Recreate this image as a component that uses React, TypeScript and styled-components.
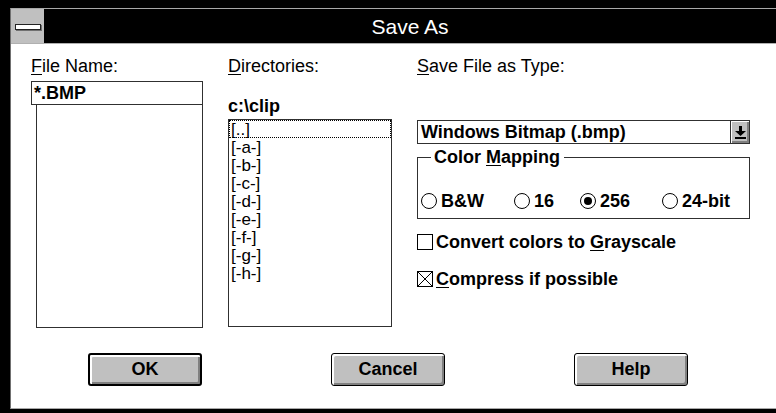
import styled, { createGlobalStyle } from "styled-components"

const Global = createGlobalStyle`
  html, body {
    margin: 0;
    padding: 0;
    background: #000;
  }
  body {
    font-family: "Liberation Sans", Arial, sans-serif;
    color: #000;
  }
  * {
    box-sizing: border-box;
  }
`

const Screen = styled.div`
  width: 776px;
  height: 413px;
  background: #000;
  padding: 8px 0 4px 10px;
  display: flex;
  overflow: hidden;
`

const Window = styled.div`
  flex: 1;
  display: flex;
  flex-direction: column;
  border-top: 1px solid #a8a8a8;
  border-left: 1px solid #707070;
  border-bottom: 1px solid #a8a8a8;
  background: #fff;
`

const TitleBar = styled.div`
  height: 35px;
  display: flex;
  background: #000;
  border-bottom: 1px solid #b0b0b0;
`

const SysMenu = styled.div`
  width: 33px;
  background: #c0c0c0;
  display: flex;
  align-items: center;
  justify-content: center;
  padding-top: 2px;
`

const SysBar = styled.div`
  width: 26px;
  height: 6px;
  background: #fff;
  border: 1px solid #222;
  box-shadow: 1px 1px 0 #707070;
`

const Title = styled.div`
  flex: 1;
  display: flex;
  align-items: center;
  justify-content: center;
  color: #fff;
  font-size: 21px;
  padding-top: 2px;
`

const Client = styled.div`
  flex: 1;
  display: flex;
  flex-direction: column;
  padding: 12px 0 0 20px;
`

const Columns = styled.div`
  display: grid;
  grid-template-columns: 172px 164px 333px;
  column-gap: 25px;
`

const Column = styled.div`
  display: flex;
  flex-direction: column;
`

const Label = styled.div`
  font-size: 18px;
  line-height: 20px;
  height: 20px;
  white-space: nowrap;
`

const Key = styled.span`
  text-decoration: underline;
  text-underline-offset: 2px;
  text-decoration-thickness: 1px;
`

const EditBox = styled.div`
  margin-top: 5px;
  height: 24px;
  border: 1px solid #303030;
  font-size: 18px;
  font-weight: 700;
  line-height: 22px;
  padding-left: 2px;
`

const ListBox = styled.div<{ $h: number; $indent?: number }>`
  height: ${(p) => p.$h}px;
  margin-left: ${(p) => p.$indent ?? 0}px;
  border: 1px solid #303030;
  display: flex;
  flex-direction: column;
`

const Path = styled.div`
  margin-top: 20px;
  font-size: 18px;
  font-weight: 700;
  line-height: 20px;
`

const DirItem = styled.div<{ $focus?: boolean }>`
  height: 18px;
  line-height: 17px;
  font-size: 17px;
  padding-left: 1px;
  border: 1px dotted ${(p) => (p.$focus ? "#000" : "transparent")};
`

const Combo = styled.div`
  margin-top: 44px;
  height: 24px;
  border: 1px solid #303030;
  display: flex;
`

const ComboText = styled.div`
  flex: 1;
  font-size: 18px;
  font-weight: 700;
  line-height: 22px;
  padding-left: 3px;
`

const DropButton = styled.div`
  width: 19px;
  border-left: 1px solid #303030;
  background: #c0c0c0;
  box-shadow: inset 1px 1px #fff, inset -2px -2px #808080;
  display: flex;
  align-items: center;
  justify-content: center;
`

const Group = styled.fieldset`
  margin: 3px 0 0;
  height: 72px;
  border: 1px solid #303030;
  padding: 0 3px 0 3px;
`

const Legend = styled.legend`
  margin-left: 10px;
  padding: 0 4px 0 3px;
  font-size: 18px;
  line-height: 20px;
  font-weight: 600;
`

const RadioRow = styled.div`
  margin-top: 24px;
  display: grid;
  grid-template-columns: 93px 66px 82px auto;
`

const Option = styled.div<{ $gap?: number }>`
  display: flex;
  align-items: center;
  gap: ${(p) => p.$gap ?? 4}px;
  font-size: 18px;
  font-weight: 700;
  line-height: 20px;
  white-space: nowrap;
`

const Radio = styled.span<{ $on?: boolean }>`
  width: 16px;
  height: 16px;
  border-radius: 50%;
  border: 1px solid #000;
  background: #fff;
  display: flex;
  align-items: center;
  justify-content: center;

  &::after {
    content: "";
    width: 8px;
    height: 8px;
    border-radius: 50%;
    background: ${(p) => (p.$on ? "#000" : "transparent")};
  }
`

const CheckRow = styled(Option)<{ $top: number }>`
  margin-top: ${(p) => p.$top}px;
`

const Box = styled.span`
  width: 16px;
  height: 16px;
  border: 1px solid #000;
  background: #fff;
  display: flex;
`

const ButtonRow = styled.div`
  margin-top: 25px;
  padding-left: 57px;
  display: flex;
  gap: 129px;
`

const Button = styled.button<{ $default?: boolean }>`
  width: 114px;
  height: 33px;
  background: #c0c0c0;
  border: ${(p) => (p.$default ? 2 : 1)}px solid #000;
  border-radius: 3px;
  box-shadow: inset 2px 2px #fff, inset -2px -2px #808080;
  font-family: "Liberation Sans", Arial, sans-serif;
  font-size: 18px;
  font-weight: 700;
  color: #000;
  padding: 0;
`

const dirs = ["[..]", "[-a-]", "[-b-]", "[-c-]", "[-d-]", "[-e-]", "[-f-]", "[-g-]", "[-h-]"]

const DownArrow = () => (
  <svg width="11" height="13" viewBox="0 0 11 13">
    <rect x="4" y="0" width="3" height="5" fill="#000" />
    <polygon points="0,5 11,5 5.5,10" fill="#000" />
    <rect x="0" y="11" width="11" height="2" fill="#000" />
  </svg>
)

const Cross = () => (
  <svg width="14" height="14" viewBox="0 0 14 14">
    <line x1="0" y1="0" x2="14" y2="14" stroke="#000" strokeWidth="1" />
    <line x1="14" y1="0" x2="0" y2="14" stroke="#000" strokeWidth="1" />
  </svg>
)

export default function App() {
  return (
    <Screen>
      <Global />
      <Window>
        <TitleBar>
          <SysMenu>
            <SysBar />
          </SysMenu>
          <Title>Save As</Title>
        </TitleBar>
        <Client>
          <Columns>
            <Column>
              <Label>
                <Key>F</Key>ile Name:
              </Label>
              <EditBox>*.BMP</EditBox>
              <ListBox $h={224} $indent={5} style={{ marginTop: -1 }} />
            </Column>
            <Column>
              <Label>
                <Key>D</Key>irectories:
              </Label>
              <Path>c:\clip</Path>
              <ListBox $h={208} style={{ marginTop: 3 }}>
                {dirs.map((d, i) => (
                  <DirItem key={d} $focus={i === 0}>
                    {d}
                  </DirItem>
                ))}
              </ListBox>
            </Column>
            <Column>
              <Label>
                <Key>S</Key>ave File as Type:
              </Label>
              <Combo>
                <ComboText>Windows Bitmap (.bmp)</ComboText>
                <DropButton>
                  <DownArrow />
                </DropButton>
              </Combo>
              <Group>
                <Legend>
                  Color <Key>M</Key>apping
                </Legend>
                <RadioRow>
                  <Option>
                    <Radio />
                    <span>B&amp;W</span>
                  </Option>
                  <Option>
                    <Radio />
                    <span>16</span>
                  </Option>
                  <Option>
                    <Radio $on />
                    <span>256</span>
                  </Option>
                  <Option>
                    <Radio />
                    <span>24-bit</span>
                  </Option>
                </RadioRow>
              </Group>
              <CheckRow $top={13} $gap={3}>
                <Box />
                <span>
                  Convert colors to <Key>G</Key>rayscale
                </span>
              </CheckRow>
              <CheckRow $top={17} $gap={3}>
                <Box>
                  <Cross />
                </Box>
                <span>
                  <Key>C</Key>ompress if possible
                </span>
              </CheckRow>
            </Column>
          </Columns>
          <ButtonRow>
            <Button $default>OK</Button>
            <Button>Cancel</Button>
            <Button>Help</Button>
          </ButtonRow>
        </Client>
      </Window>
    </Screen>
  )
}
